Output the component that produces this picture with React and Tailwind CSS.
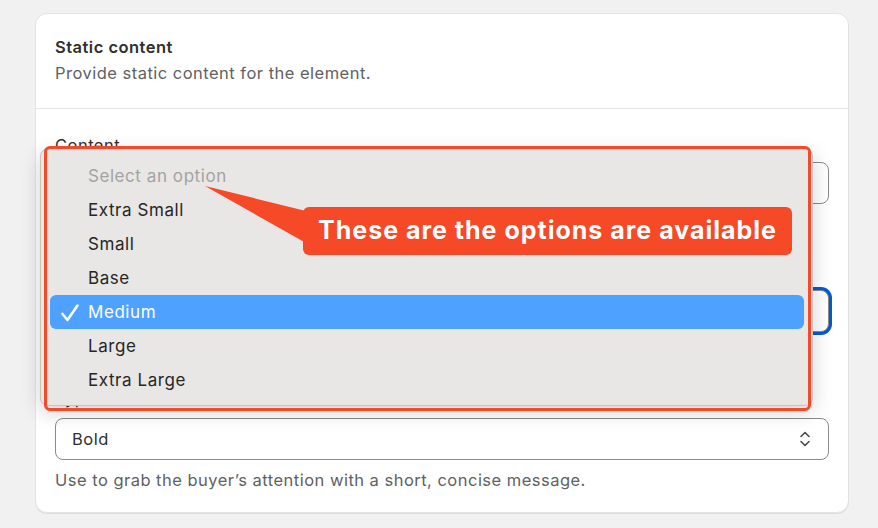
import React from "react";

const font = { fontFamily: "Inter, 'Noto Sans', sans-serif" };

function Chevrons() {
  return (
    <svg width="14" height="20" viewBox="0 0 14 20" fill="none" stroke="#4a4a4a" strokeWidth="1.6" strokeLinecap="round" strokeLinejoin="round">
      <path d="M3 7.5 L7 3.5 L11 7.5" />
      <path d="M3 12.5 L7 16.5 L11 12.5" />
    </svg>
  );
}

function Check() {
  return (
    <svg width="20" height="20" viewBox="0 0 20 20" fill="none" stroke="#ffffff" strokeWidth="2.6" strokeLinecap="round" strokeLinejoin="round">
      <path d="M2.5 11 L7.5 17 L17.5 2.5" />
    </svg>
  );
}

const options = ["Extra Small", "Small", "Base", "Medium", "Large", "Extra Large"];

export default function App() {
  return (
    <div className="relative w-[878px] h-[528px] bg-[#f1f1f1] pt-[13px] pl-[35px] text-[#303030] tracking-[0.03em]" style={font}>
      {/* Card */}
      <div className="w-[814px] h-[500px] bg-white rounded-[12px] border border-[#e3e3e3] shadow-[0_1px_0_rgba(0,0,0,0.08)] overflow-hidden">
        <div className="px-[19px] pt-[21px] pb-[23px] border-b border-[#e6e6e6]">
          <div className="text-[16.5px] leading-[24px] font-semibold">Static content</div>
          <div className="mt-[2px] text-[16.5px] leading-[24px] text-[#616161]">Provide static content for the element.</div>
        </div>
        <div className="px-[19px] pt-[24px]">
          <div className="text-[16.5px] leading-[24px]">Content</div>
          <div className="mt-[5px] h-[42px] rounded-[8px] border border-[#8a8a8a] bg-white"></div>
          <div className="h-[57px]"></div>
          <div className="text-[16.5px] leading-[24px]">Size</div>
          <div className="mt-[5px] h-[42px] rounded-[8px] border border-[#8a8a8a] bg-white ring-[3px] ring-[#005bd3]"></div>
          <div className="h-[54px]"></div>
          <div className="text-[16.5px] leading-[24px]">Type</div>
          <div className="mt-[8px] h-[42px] rounded-[8px] border border-[#8a8a8a] bg-white flex items-center justify-between pl-[16px] pr-[16px]">
            <span className="text-[16.5px]">Bold</span>
            <Chevrons />
          </div>
          <div className="mt-[9px] text-[16.5px] leading-[22px] text-[#616161]">Use to grab the buyer’s attention with a short, concise message.</div>
        </div>
      </div>

      {/* Dropdown popup */}
      <div className="absolute left-[40px] top-[148px] w-[773px] h-[258px] rounded-[8px] bg-[#e8e7e5] border border-[#c4c4c4] shadow-[0_6px_20px_rgba(0,0,0,0.18)] pl-[9px] pr-[8px] pt-[10px] tracking-[0.035em]">
        <div className="h-[34px] flex items-center pt-[1px] pl-[38px] text-[17px] text-[#a3a3a3]">Select an option</div>
        {options.map((o) => (
          <div
            key={o}
            className={
              o === "Medium"
                ? "h-[34px] flex items-center pt-[1px] rounded-[6px] bg-[#4fa1ff] text-white"
                : "h-[34px] flex items-center pt-[1px] text-[#262626]"
            }
          >
            <span className="w-[38px] flex justify-center pl-[1px]">{o === "Medium" ? <Check /> : null}</span>
            <span className="text-[17px]">{o}</span>
          </div>
        ))}
      </div>

      {/* Annotation outline */}
      <div className="absolute left-[44px] top-[146px] w-[767px] h-[265px] rounded-[6px] border-[3px] border-[#f54927] pointer-events-none"></div>

      {/* Callout pointer */}
      <svg className="absolute left-[200px] top-[180px]" width="110" height="70" viewBox="0 0 110 70">
        <polygon points="5,6 106,31 106,63" fill="#f54927" />
      </svg>

      {/* Callout bubble */}
      <div className="absolute left-[303px] top-[207px] w-[489px] h-[48px] rounded-[6px] bg-[#f54927] flex items-center justify-center text-white text-[25px] font-bold tracking-[1px]">
        These are the options are available
      </div>
    </div>
  );
}
